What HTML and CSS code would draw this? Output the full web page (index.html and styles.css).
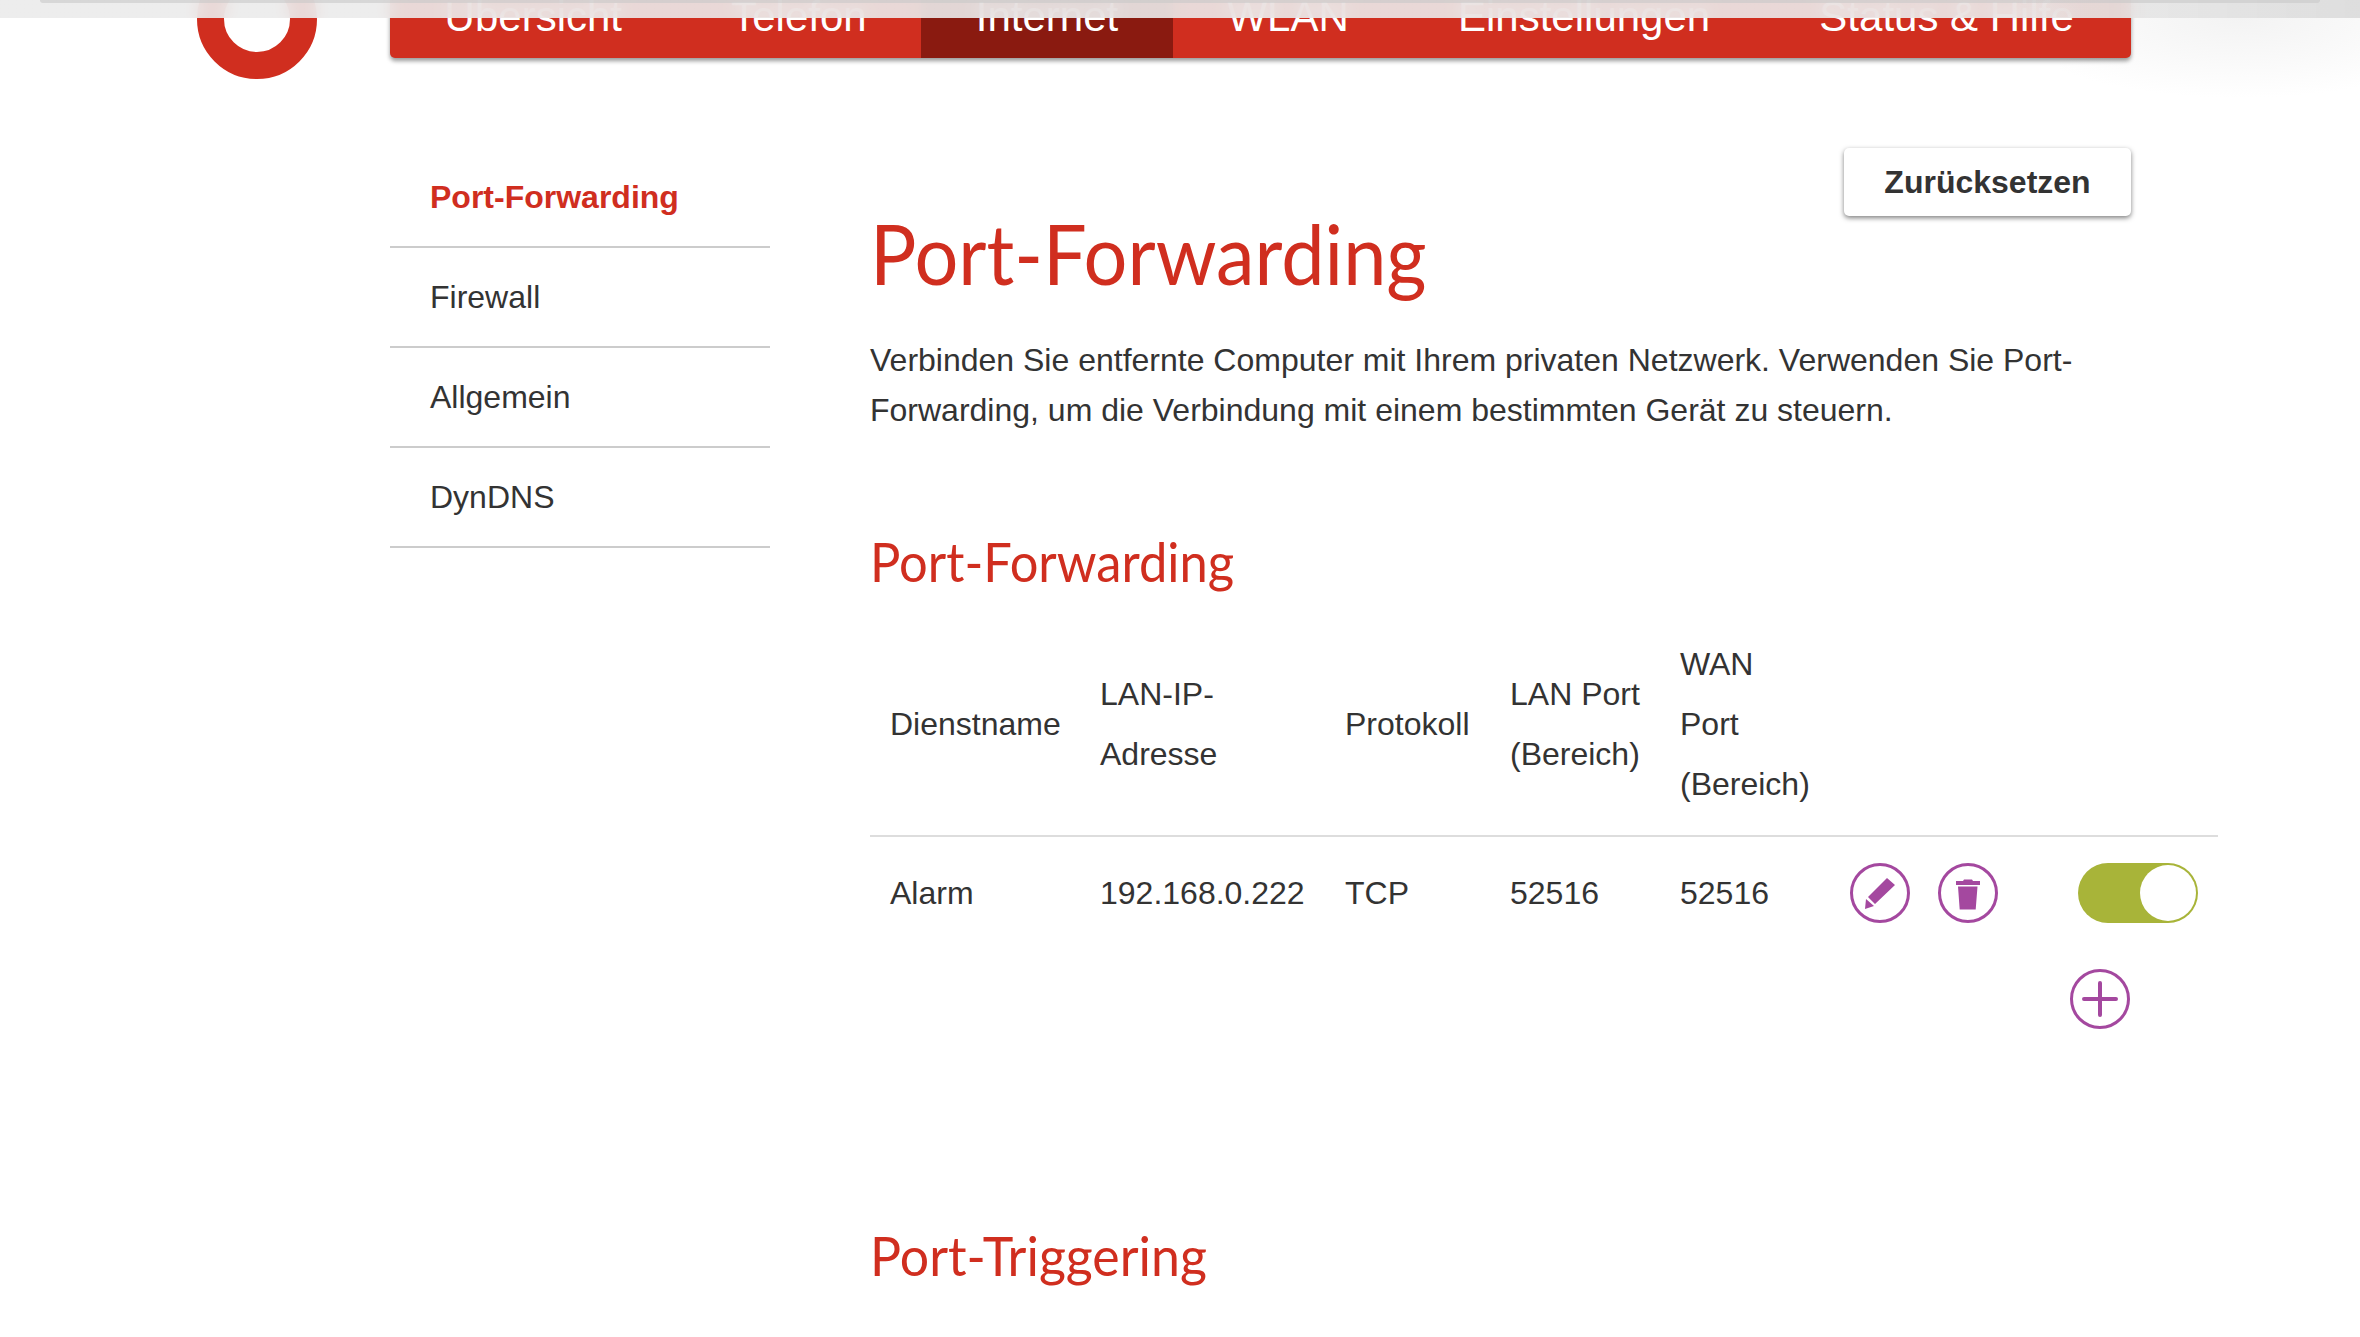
FILE: index.html
```html
<!DOCTYPE html>
<html lang="de">
<head>
  <meta charset="UTF-8" />
  <title>Port-Forwarding</title>
  <link rel="stylesheet" href="styles.css">
</head>
<body>

  <div class="top-band"><div class="top-band-line"></div></div>
  <div class="top-glow"></div>

  <header class="header">
    <svg class="logo" viewBox="0 0 120 79">
      <circle cx="60" cy="19" r="46.5" fill="none" stroke="#d02e1f" stroke-width="27" />
    </svg>
    <nav class="nav">
      <a class="nav-item">Übersicht</a>
      <a class="nav-item">Telefon</a>
      <a class="nav-item active">Internet</a>
      <a class="nav-item">WLAN</a>
      <a class="nav-item">Einstellungen</a>
      <a class="nav-item">Status &amp; Hilfe</a>
    </nav>
  </header>

  <div class="layout">
    <aside class="sidebar">
      <a class="side-item current">Port-Forwarding</a>
      <a class="side-item">Firewall</a>
      <a class="side-item">Allgemein</a>
      <a class="side-item">DynDNS</a>
    </aside>

    <main class="content">
      <div class="actions">
        <button class="reset">Zurücksetzen</button>
      </div>

      <h1>Port-Forwarding</h1>
      <p class="intro">Verbinden Sie entfernte Computer mit Ihrem privaten Netzwerk. Verwenden Sie Port-Forwarding, um die Verbindung mit einem bestimmten Gerät zu steuern.</p>

      <h2>Port-Forwarding</h2>

      <table class="ports">
        <thead>
          <tr>
            <th class="c-name">Dienstname</th>
            <th class="c-ip">LAN-IP-<br>Adresse</th>
            <th class="c-proto">Protokoll</th>
            <th class="c-lan">LAN Port<br>(Bereich)</th>
            <th class="c-wan">WAN<br>Port<br>(Bereich)</th>
            <th class="c-icons"></th>
            <th class="c-toggle"></th>
          </tr>
        </thead>
        <tbody>
          <tr>
            <td>Alarm</td>
            <td>192.168.0.222</td>
            <td>TCP</td>
            <td>52516</td>
            <td>52516</td>
            <td>
              <div class="icon-row">
                <span class="round-icon">
                  <svg viewBox="0 0 60 60"><path d="M37 15l8 7-20 19-7-7zM16 36l8 7-9 3z" fill="#a4489f" /></svg>
                </span>
                <span class="round-icon">
                  <svg viewBox="0 0 60 60"><path d="M18 18h7l1-1.500h8l1 1.500h7v4h-24zM20 23.500h19.500l-1.800 23h-16z" fill="#a4489f" /></svg>
                </span>
              </div>
            </td>
            <td>
              <div class="toggle"><div class="toggle-knob"></div></div>
            </td>
          </tr>
        </tbody>
      </table>

      <div class="add-row">
        <span class="round-icon">
          <svg viewBox="0 0 60 60"><path d="M30 14v32M14 30h32" stroke="#a4489f" stroke-width="4" stroke-linecap="round" fill="none" /></svg>
        </span>
      </div>

      <h2 class="triggering">Port-Triggering</h2>
    </main>
  </div>

</body>
</html>
```

FILE: styles.css
```css
html, body {
  height: 100%;
}

body {
  margin: 0;
  background: #fff;
  color: #333;
  font-family: 'Liberation Sans', Arial, sans-serif;
  font-size: 32px;
  line-height: 50px;
  overflow: hidden;
}

.top-band {
  position: absolute;
  top: 0;
  left: 0;
  right: 0;
  height: 18px;
  background: linear-gradient(90deg, rgba(235, 235, 235, 0.9) 85%, rgba(220, 220, 220, 0.95));
  backdrop-filter: blur(8px);
  z-index: 2;
}

.top-band-line {
  height: 3px;
  margin: 0 40px 0 40px;
  background: rgba(200, 200, 200, 0.6);
  border-radius: 0 0 14px 14px;
}

.top-glow {
  position: absolute;
  top: 0;
  right: 0;
  width: 300px;
  height: 100px;
  background: radial-gradient(ellipse 240px 80px at 60% 18px, #f3f3f3, #fff);
}

.header {
  display: flex;
  position: relative;
  height: 58px;
  padding-left: 197px;
}

.logo {
  width: 120px;
  height: 79px;
  margin-right: 73px;
  flex: none;
}

.nav {
  display: flex;
  width: 1741px;
  height: 58px;
  background: #d02e1f;
  border-radius: 0 0 5px 5px;
  box-shadow: 0 3px 4px rgba(0, 0, 0, 0.4);
  overflow: hidden;
}

.nav-item {
  display: block;
  padding: 0 54.6px;
  height: 58px;
  color: #fff;
  font-size: 42px;
  line-height: 34px;
  white-space: nowrap;
}

.active {
  background: #8a1a10;
}

.layout {
  display: flex;
  padding-left: 390px;
}

.sidebar {
  width: 380px;
  margin-top: 90px;
  margin-right: 100px;
  flex: none;
}

.side-item {
  display: block;
  height: 98px;
  padding-left: 40px;
  line-height: 98px;
  border-bottom: 2px solid #ccc;
}

.current {
  color: #d02e1f;
  font-weight: bold;
}

.content {
  width: 1261px;
  flex: none;
}

.actions {
  display: flex;
  justify-content: flex-end;
  margin-top: 90px;
}

.reset {
  width: 287px;
  height: 68px;
  background: #fff;
  color: #333;
  border: none;
  border-radius: 5px;
  box-shadow: 0 2px 5px rgba(0, 0, 0, 0.5);
  font-family: inherit;
  font-size: 32px;
  font-weight: bold;
}

h1, h2 {
  margin: 0;
  color: #d02e1f;
  font-family: Lato, sans-serif;
  font-weight: 400;
  transform-origin: left center;
}

h1 {
  font-size: 84px;
  line-height: 100px;
  margin-top: -13px;
  transform: scaleX(0.922);
}

.intro {
  margin: 32px 0 0;
}

h2 {
  font-size: 54px;
  line-height: 70px;
  margin-top: 92px;
  transform: scaleX(0.938);
}

.ports {
  width: 1348px;
  margin-top: 37px;
  border-collapse: collapse;
  table-layout: fixed;
  line-height: 60px;
}

.ports th {
  font-weight: normal;
  text-align: left;
  padding: 0 20px 21px;
  border-bottom: 2px solid #ddd;
}

.ports td {
  padding: 26px 20px 0;
  vertical-align: middle;
}

.c-name { width: 170px; }
.c-ip { width: 205px; }
.c-proto { width: 125px; }
.c-lan { width: 130px; }
.c-wan { width: 130px; }
.c-icons { width: 178px; }

.icon-row {
  display: flex;
  gap: 28px;
}

.round-icon {
  display: block;
  width: 60px;
  height: 60px;
  flex: none;
  box-sizing: border-box;
  border: 3px solid #a4489f;
  border-radius: 50%;
}

.round-icon svg {
  display: block;
  width: 60px;
  height: 60px;
  margin: -3px;
}

.toggle {
  display: flex;
  justify-content: flex-end;
  width: 120px;
  height: 60px;
  margin-left: auto;
  box-sizing: border-box;
  padding: 2px;
  background: #a8b439;
  border-radius: 30px;
}

.toggle-knob {
  width: 56px;
  height: 56px;
  background: #fff;
  border-radius: 50%;
}

.add-row {
  display: flex;
  justify-content: flex-end;
  margin-top: 46px;
  padding-right: 1px;
}

.triggering {
  margin-top: 192px;
  transform: scaleX(0.96);
}
```
